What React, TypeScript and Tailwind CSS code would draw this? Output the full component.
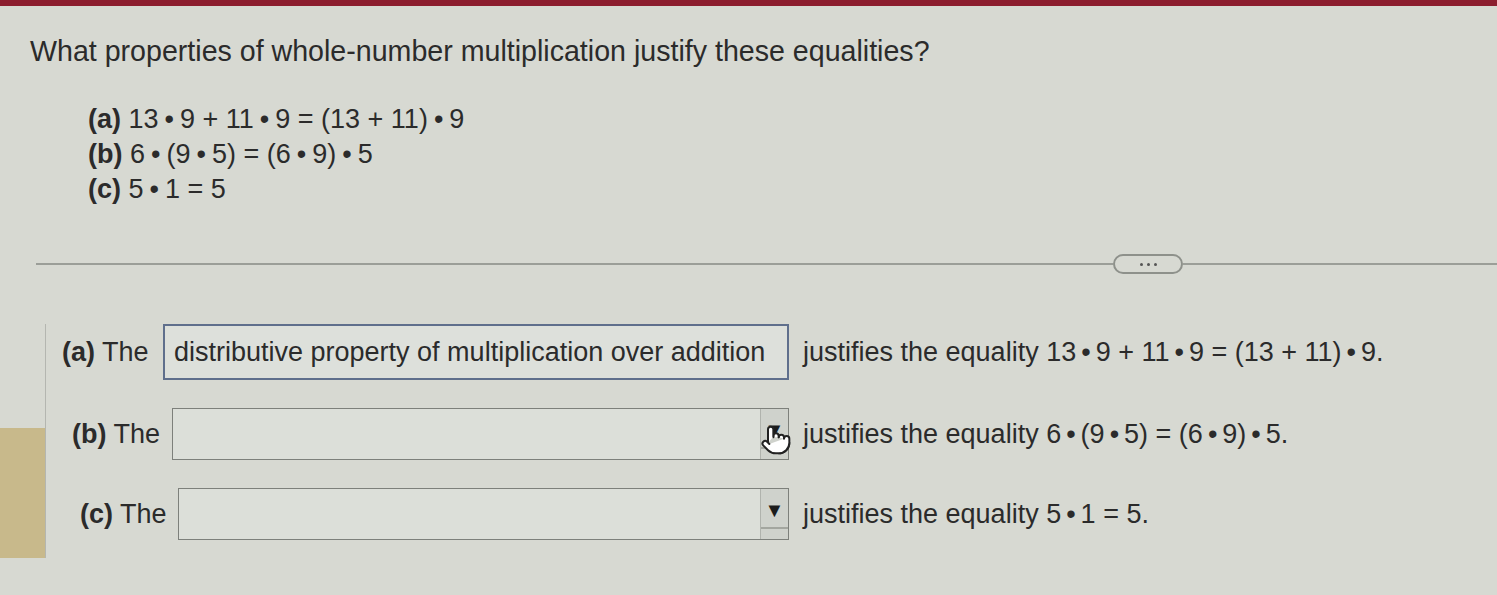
import { Pointer } from "lucide-react";

const Dot = ({ wide }: { wide?: boolean }) => (
  <span className={wide ? "mx-[6px]" : "mx-[5px]"}>•</span>
);

function Dropdown({ width, hand }: { width: string; hand?: boolean }) {
  return (
    <div
      className={`relative flex h-[52px] ${width} items-stretch border border-[#7d807b] bg-[#dcdfd9]`}
    >
      <div className="flex-1" />
      <div className="flex w-[28px] flex-col border-l border-[#b0b3ad] bg-[#cfd2cc]">
        <div className="flex flex-1 items-start justify-center pt-[11px]">
          <span className="text-[20px] leading-none text-[#1c1c1c]">▼</span>
        </div>
        <div className="mb-[10px] h-[2px] bg-[#a3a69f]" />
      </div>
      {hand && (
        <Pointer
          className="absolute right-[-4px] top-[14px] h-[34px] w-[32px] fill-white text-[#222]"
          strokeWidth={1.5}
        />
      )}
    </div>
  );
}

export default function App() {
  return (
    <div
      className="relative h-[595px] w-[1497px] overflow-hidden bg-[#d7d9d2] text-[#2b2b2b]"
      style={{ fontFamily: '"Liberation Sans", Arial, sans-serif' }}
    >
      <div className="h-[6px] bg-[#8c1d2e]" />

      <div className="pl-[30px] pt-[28px]">
        <h1 className="text-[28.6px] leading-[34px]">
          What properties of whole-number multiplication justify these equalities?
        </h1>

        <div className="mt-[34px] flex flex-col pl-[58px] text-[27px] leading-[35px]">
          <div>
            <b>(a)</b> 13<Dot wide />9 + 11<Dot wide />9 = (13 + 11)<Dot wide />9
          </div>
          <div>
            <b>(b)</b> 6<Dot wide />(9<Dot wide />5) = (6<Dot wide />9)<Dot wide />5
          </div>
          <div>
            <b>(c)</b> 5<Dot wide />1 = 5
          </div>
        </div>
      </div>

      <div className="mt-[47px] flex items-center pl-[36px]">
        <div className="h-[2px] w-[1077px] bg-[#9b9e98]" />
        <div className="flex h-[20px] w-[70px] items-center justify-center gap-[4px] rounded-full border-2 border-[#8e918b]">
          <span className="h-[3px] w-[3px] rounded-full bg-[#555]" />
          <span className="h-[3px] w-[3px] rounded-full bg-[#555]" />
          <span className="h-[3px] w-[3px] rounded-full bg-[#555]" />
        </div>
        <div className="h-[2px] flex-1 bg-[#9b9e98]" />
      </div>

      <div className="mt-[50px] flex">
        <div className="w-[46px] border-r border-[#b4b6b0]">
          <div className="mt-[104px] h-[130px] bg-[#c8b98b]" />
        </div>

        <div className="flex flex-col gap-[28px] pl-[16px] text-[27px]">
          <div className="flex items-center">
            <span className="w-[101px] whitespace-nowrap">
              <b>(a)</b> The
            </span>
            <div className="flex h-[56px] w-[626px] items-center whitespace-nowrap border-2 border-[#5f6f8c] bg-[#dde0db] px-[9px]">
              distributive property of multiplication over addition
            </div>
            <span className="ml-[14px] whitespace-nowrap">
              justifies the equality 13<Dot />9 + 11<Dot />9 = (13 + 11)<Dot />9.
            </span>
          </div>

          <div className="flex items-center">
            <span className="w-[110px] whitespace-nowrap pl-[10px]">
              <b>(b)</b> The
            </span>
            <Dropdown width="w-[617px]" hand />
            <span className="ml-[14px] whitespace-nowrap">
              justifies the equality 6<Dot />(9<Dot />5) = (6<Dot />9)<Dot />5.
            </span>
          </div>

          <div className="flex items-center">
            <span className="w-[116px] whitespace-nowrap pl-[18px]">
              <b>(c)</b> The
            </span>
            <Dropdown width="w-[611px]" />
            <span className="ml-[14px] whitespace-nowrap">
              justifies the equality 5<Dot />1 = 5.
            </span>
          </div>
        </div>
      </div>
    </div>
  );
}
